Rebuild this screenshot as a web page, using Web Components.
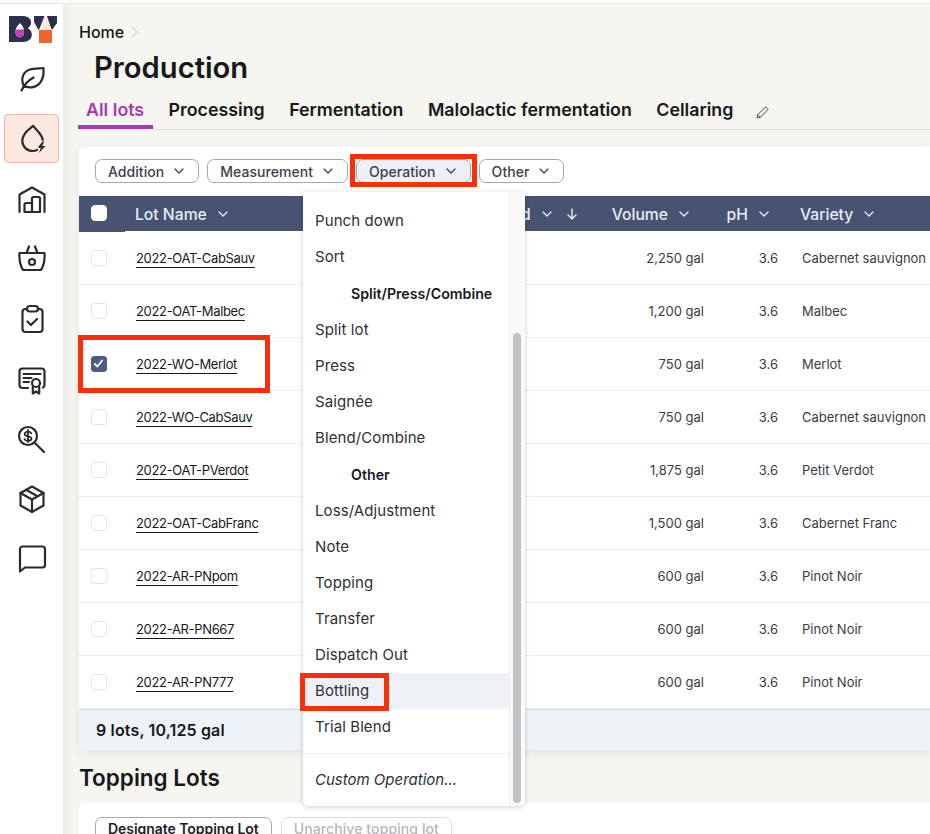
<!DOCTYPE html>
<html lang="en">
<head>
<meta charset="utf-8">
<title>Production</title>
<style>
    html, body { margin: 0; height: 100%; overflow: hidden; }
    body { font-family: Inter, "Liberation Sans", sans-serif; color: #17181c; background: #f6f5f0; }
</style>
</head>
<body>
<app-shell>
    <side-nav slot="nav"></side-nav>
    <page-head slot="head" crumb="Home" title="Production"></page-head>
    <tab-bar slot="head">
        <tab-link active>All lots</tab-link>
        <tab-link>Processing</tab-link>
        <tab-link>Fermentation</tab-link>
        <tab-link>Malolactic fermentation</tab-link>
        <tab-link>Cellaring</tab-link>
    </tab-bar>
    <lots-table>
        <action-button slot="actions" chevron>Addition</action-button>
        <action-button slot="actions" chevron>Measurement</action-button>
        <action-button slot="actions" chevron open>Operation</action-button>
        <action-button slot="actions" chevron>Other</action-button>
        <lot-row volume="2,250 gal" variety="Cabernet sauvignon">2022-OAT-CabSauv</lot-row>
        <lot-row volume="1,200 gal" variety="Malbec">2022-OAT-Malbec</lot-row>
        <lot-row volume="750 gal" variety="Merlot" checked>2022-WO-Merlot</lot-row>
        <lot-row volume="750 gal" variety="Cabernet sauvignon">2022-WO-CabSauv</lot-row>
        <lot-row volume="1,875 gal" variety="Petit Verdot">2022-OAT-PVerdot</lot-row>
        <lot-row volume="1,500 gal" variety="Cabernet Franc">2022-OAT-CabFranc</lot-row>
        <lot-row volume="600 gal" variety="Pinot Noir">2022-AR-PNpom</lot-row>
        <lot-row volume="600 gal" variety="Pinot Noir">2022-AR-PN667</lot-row>
        <lot-row volume="600 gal" variety="Pinot Noir">2022-AR-PN777</lot-row>
        <span slot="total">9 lots, 10,125 gal</span>
    </lots-table>
    <topping-card>
        <action-button slot="actions" strong>Designate Topping Lot</action-button>
        <action-button slot="actions" disabled>Unarchive topping lot</action-button>
    </topping-card>
    <operation-menu slot="over">
        <menu-item>Punch down</menu-item>
        <menu-item>Sort</menu-item>
        <menu-item heading>Split/Press/Combine</menu-item>
        <menu-item>Split lot</menu-item>
        <menu-item>Press</menu-item>
        <menu-item>Saignée</menu-item>
        <menu-item>Blend/Combine</menu-item>
        <menu-item heading>Other</menu-item>
        <menu-item>Loss/Adjustment</menu-item>
        <menu-item>Note</menu-item>
        <menu-item>Topping</menu-item>
        <menu-item>Transfer</menu-item>
        <menu-item>Dispatch Out</menu-item>
        <menu-item hover>Bottling</menu-item>
        <menu-item>Trial Blend</menu-item>
        <menu-item custom>Custom Operation...</menu-item>
    </operation-menu>
    <mark-box slot="over" style="left:350px;top:151px;width:127px;height:33px"></mark-box>
    <mark-box slot="over" style="left:78px;top:332px;width:192px;height:58px"></mark-box>
    <mark-box slot="over" style="left:300px;top:670px;width:89px;height:38px"></mark-box>
</app-shell>

<script>
    function define(name, html, extra) {
        customElements.define(name, class extends HTMLElement {
            constructor() {
                super();
                this.attachShadow({mode: "open"});
                this.shadowRoot.innerHTML = html;
            }
            connectedCallback() {
                if (extra) extra.call(this, this.shadowRoot);
            }
        });
    }

    const chevron = '<svg width="10" height="6" viewBox="0 0 10 6" fill="none" stroke="currentColor" stroke-width="1.3" stroke-linecap="round" stroke-linejoin="round"><path d="M1 1l4 4 4-4"/></svg>';
    const arrow = '<svg width="10" height="12" viewBox="0 0 10 12" fill="none" stroke="currentColor" stroke-width="1.4" stroke-linecap="round" stroke-linejoin="round"><path d="M5 1v10M1 7l4 4 4-4"/></svg>';

    define("app-shell", `
        <style>
            :host { display: grid; grid-template-columns: 63px 1fr; width: 930px; height: 834px; overflow: hidden; position: relative; border-top: 3px solid #fbfbfa; box-sizing: border-box; }
            main { padding: 0 0 0 16px; min-width: 0; overflow: hidden; border-top: 1px solid #ebebe8; background: linear-gradient(90deg, #eeede9 0, #f6f5f0 10px); }
        </style>
        <slot name="nav"></slot>
        <main>
            <slot name="head"></slot>
            <slot></slot>
        </main>
        <slot name="over"></slot>
    `);

    // all drawn on a 32 box, centred on the sidebar column
    const icons = {
        leaf: '<path d="M5.500 27.500C8 22 12 17.500 17.500 14.500M7.500 22.500C4.500 15 7.500 8.500 14 6.500c4-1.200 9-1 13.500-1.500.5 5-.5 11.500-4 15.500-4 4.300-11 5.200-16 2Z"/>',
        drop: '<path d="M21 27c-1.300.7-2.700 1-4 1-6 0-10.700-4.400-10.700-10 0-3.600 1.900-6.700 4.200-9.500L17 2.800l5.500 6.200c2 2.400 3.800 5 4.200 7.800"/><path d="M26.500 18.500 21.500 24.800h3.300L23 30l6.500-7h-3.300l2-4.500Z" fill="currentColor" stroke="none"/>',
        winery: '<path d="M3.500 29V11.500L16 4.500l12.500 7V29"/><path d="M8.500 29V21.500c0-.8.6-1.500 1.500-1.500h6M16 29V15.500c0-.8.6-1.500 1.500-1.500h5c.9 0 1.500.7 1.500 1.500V29M8.500 29H24"/>',
        basket: '<path d="M3.500 10h25c.5 5.500-.5 11-2.300 15-.5 1.200-1.500 2-2.700 2H8.500c-1.200 0-2.200-.8-2.700-2-1.800-4-2.800-9.500-2.300-15Z"/><circle cx="16" cy="19" r="3"/><path d="M10.500 10l2.500-6.500M21.500 10 19 3.500"/>',
        clip: '<path d="M11 6H9.500c-1.700 0-3 1.300-3 3v17c0 1.700 1.300 3 3 3h14c1.700 0 3-1.300 3-3V9c0-1.700-1.300-3-3-3H22"/><rect x="11" y="3" width="11" height="5.500" rx="2.700"/><path d="M11.500 18.500 15 22l6-6"/>',
        cert: '<path d="M12 25H6.500c-1.700 0-3-1.300-3-3V8.500c0-1.700 1.300-3 3-3h19c1.700 0 3 1.300 3 3V22c0 1-.5 2-1.500 2.500"/><path d="M7.500 11h17M7.500 15h8M7.500 19h5.500"/><circle cx="20" cy="20" r="4"/><path d="M16.800 24v6.500l3.200-2 3.200 2V24"/>',
        search: '<circle cx="12" cy="13" r="9"/><path d="m19.500 20.500 8.500 8.500"/><path d="M15.300 10.300c-.5-1-1.600-1.600-3.300-1.600-2 0-3.300 1-3.300 2.300 0 3.300 6.800 1.500 6.800 4.500 0 1.400-1.500 2.300-3.500 2.300-1.700 0-3-.6-3.500-1.700M12 7v12" stroke-width="1.800"/>',
        box: '<path d="M16 3.500 27.500 10v12.500L16 29 4.500 22.500V10Z"/><path d="M4.500 10 16 16.500 27.500 10M16 16.500V29M10 6.800l11.500 6.500"/>',
        chat: '<path d="M4 28.500V6c0-1.400 1.100-2.500 2.500-2.500h20c1.400 0 2.500 1.100 2.500 2.500v16c0 1.400-1.100 2.500-2.500 2.500H9Z"/>'
    };

    define("nav-icon", `
        <style>
            :host { display: flex; align-items: center; justify-content: center; width: 55px; height: 49px; box-sizing: border-box; border: 1px solid transparent; border-radius: 4px; color: #2b2b2e; }
            :host([active]) { background: #fde9e0; border-color: #f3b9a0; }
            svg { width: 32px; height: 32px; fill: none; stroke: currentColor; stroke-width: 2.2; stroke-linecap: round; stroke-linejoin: round; }
        </style>
        <svg viewBox="0 0 32 32"></svg>
    `, function (root) {
        root.querySelector("svg").innerHTML = icons[this.getAttribute("name")];
    });

    define("side-nav", `
        <style>
            :host { display: flex; flex-direction: column; align-items: center; background: #fff; height: 100%; padding-top: 11px; box-sizing: border-box; border-top: 1px solid #ebebe8; }
            .logo { display: block; align-self: flex-start; margin: 0 0 11px 9px; }
            .stack { display: flex; flex-direction: column; align-items: center; gap: 11px; }
        </style>
        <svg class="logo" width="48" height="28" viewBox="0 0 48 28">
            <path d="M0 1h13c6 0 9 2.600 9 6.400 0 2.800-1.500 4.800-3.600 5.900 2.800 1 4.400 3.300 4.400 6.200 0 4.700-3.500 7.500-9.500 7.500H0Z" fill="#2a2f4b"/>
            <path d="M11 8c2 2.200 4 4.800 4 7.300V18a4.200 4.200 0 0 1-8.400 0v-2.700C6.600 12.800 9 10.200 11 8Z" fill="#fff"/>
            <path d="M6.600 14.500h8.400V18a4.200 4.200 0 0 1-8.400 0Z" fill="#c63fc0"/>
            <path d="M25 1h10.500L30 15h-.5L25 7Z" fill="#2a2f4b"/>
            <path d="M38 1h10v7l-5 7h-.5Z" fill="#2a2f4b"/>
            <path d="M36.700 1 43 15H30Z" fill="#fbe8dd"/>
            <rect x="30" y="15" width="13" height="13" fill="#f2642d"/>
        </svg>
        <div class="stack"></div>
    `, function (root) {
        const stack = root.querySelector(".stack");
        ["leaf", "drop", "winery", "basket", "clip", "cert", "search", "box", "chat"].forEach((name) => {
            let icon = document.createElement("nav-icon");
            icon.setAttribute("name", name);
            if (name === "drop") icon.setAttribute("active", "");
            stack.appendChild(icon);
        });
    });

    define("page-head", `
        <style>
            :host { display: block; }
            .crumb { display: flex; align-items: center; gap: 7px; height: 20px; margin-top: 18px; font-size: 16px; font-weight: 500; }
            .crumb svg { color: #d5d5d2; }
            h1 { margin: 7px 0 0 15px; font-size: 29.200px; line-height: 38px; font-weight: 600; }
        </style>
        <div class="crumb"><span id="crumb"></span>
            <svg width="7" height="12" viewBox="0 0 7 12" fill="none" stroke="currentColor" stroke-width="1.2"><path d="M1 1l5 5-5 5"/></svg>
        </div>
        <h1 id="title"></h1>
    `, function (root) {
        root.getElementById("crumb").textContent = this.getAttribute("crumb");
        root.getElementById("title").textContent = this.getAttribute("title");
    });

    define("tab-bar", `
        <style>
            :host { display: flex; align-items: flex-end; height: 38px; margin-top: 5px; border-bottom: 1px solid #e3e3e6; box-sizing: border-box; }
            svg { margin: 0 0 9.500px 5px; color: #44464d; }
            .tabs { display: flex; margin-left: -1px; }
        </style>
        <div class="tabs"><slot></slot></div>
        <svg width="15" height="15" viewBox="0 0 15 15" fill="none" stroke="currentColor" stroke-width="1"><path d="M2 13l.8-3.400 7-7c.6-.6 1.500-.6 2.100 0l.5.5c.6.6.6 1.500 0 2.100l-7 7Z"/><path d="M2.800 9.600l2.600 2.600"/></svg>
    `);

    define("tab-link", `
        <style>
            :host { display: block; padding: 0 8px; margin-right: 8.500px; height: 37px; line-height: 36px; font-size: 17.800px; font-weight: 600; box-sizing: border-box; border-bottom: 4px solid transparent; white-space: nowrap; }
            :host([active]) { color: #a93bad; border-bottom-color: #a93bad; padding-right: 8.500px; margin-right: 8px; }
        </style>
        <slot></slot>
    `);

    define("action-button", `
        <style>
            :host { display: inline-flex; align-items: center; gap: 10px; height: 24px; padding: 0 14px 0 12px; box-sizing: border-box; border: 1px solid #a5a7ab; border-radius: 7px; background: #fff; font-size: 14px; font-weight: 500; color: #3e4149; white-space: nowrap; letter-spacing: .05px; }
            :host([open]) { background: #eaf0f6; }
            :host([strong]) { color: #1d2026; font-weight: 600; padding: 0 12px 1px; letter-spacing: -.05px; }
            :host([disabled]) { color: #b5b7bb; border-color: #dcdde0; padding: 0 12px 1px; letter-spacing: .1px; }
            span { display: inline-flex; }
        </style>
        <slot></slot><span id="c"></span>
    `, function (root) {
        let holder = root.getElementById("c");
        if (this.hasAttribute("chevron")) holder.innerHTML = chevron; else holder.remove();
    });

    const cols = "46px 400px 179px 74px 152px";

    define("check-box", `
        <style>
            :host { display: block; width: 16px; height: 16px; box-sizing: border-box; background: #fff; border: 1.5px solid #e4e6ea; border-radius: 3px; }
            :host([checked]) { background: #4d5b85; border-color: #4d5b85; }
            :host([plain]) { border-color: #fff; border-radius: 4px; }
            svg { display: none; }
            :host([checked]) svg { display: block; margin: 1px; }
        </style>
        <svg width="11" height="11" viewBox="0 0 11 11" fill="none" stroke="#fff" stroke-width="1.8" stroke-linecap="round" stroke-linejoin="round"><path d="M1.800 6l2.600 2.500 4.800-6"/></svg>
    `);

    define("lot-row", `
        <style>
            :host { display: grid; grid-template-columns: ${cols}; align-items: center; height: 53px; box-sizing: border-box; border-bottom: 1px solid #eeeff1; font-size: 13px; color: #3a3c42; }
            .check { padding-left: 12px; }
            .name { padding-left: 11px; color: #17181c; }
            u { text-decoration-thickness: 1px; text-underline-offset: 4px; letter-spacing: -.33px; }
            .num { text-align: right; }
            .variety { padding-left: 24px; white-space: nowrap; }
        </style>
        <div class="check"><check-box id="box"></check-box></div>
        <div class="name"><u><slot></slot></u></div>
        <div class="num" id="volume"></div>
        <div class="num">3.6</div>
        <div class="variety" id="variety"></div>
    `, function (root) {
        root.getElementById("volume").textContent = this.getAttribute("volume");
        root.getElementById("variety").textContent = this.getAttribute("variety");
        if (this.hasAttribute("checked")) root.getElementById("box").setAttribute("checked", "");
    });

    define("lots-table", `
        <style>
            :host { display: block; width: 851px; margin-top: 17px; background: #fff; border-radius: 5px 0 0 5px; box-shadow: 0 3px 10px rgba(40, 40, 60, .08); }
            .bar { display: flex; gap: 8px; padding: 12px 16px 13px; }
            .head { display: grid; grid-template-columns: ${cols}; align-items: center; height: 35px; padding-bottom: 2px; box-sizing: border-box; margin-bottom: 1px; background: #475370; color: #e7edf6; font-size: 15.700px; font-weight: 500; }
            .head > div { display: flex; align-items: center; gap: 11px; white-space: nowrap; }
            .head > .tick { align-self: start; height: 36px; padding: 0 0 2px 12px; box-sizing: border-box; background: #475370; }
            .split { justify-content: space-between; }
            .group { display: flex; align-items: center; gap: 11px; }
            .sorted { margin-left: -4px; }
            .sorted svg:last-of-type { margin-left: 4px; }
            .volume { padding-right: 15px; }
            .end { justify-content: flex-end; }
            .foot { display: flex; align-items: center; height: 41px; padding-left: 17px; background: #eef3f8; border-top: 1px solid #d5d9df; box-sizing: border-box; font-size: 16px; letter-spacing: .15px; font-weight: 600; border-radius: 0 0 0 5px; }
        </style>
        <div class="bar"><slot name="actions"></slot></div>
        <div class="head">
            <div class="tick"><check-box plain></check-box></div>
            <div style="padding-left:10px">Lot Name ${chevron}</div>
            <div class="split">
                <div class="group sorted">d ${chevron} ${arrow}</div>
                <div class="group volume">Volume ${chevron}</div>
            </div>
            <div class="end" style="padding-right:9px">pH ${chevron}</div>
            <div style="padding-left:22px">Variety ${chevron}</div>
        </div>
        <slot></slot>
        <div class="foot"><slot name="total"></slot></div>
    `);

    define("topping-card", `
        <style>
            :host { display: block; margin-top: 12px; }
            h2 { margin: 0; font-size: 22.500px; line-height: 32px; font-weight: 600; }
            .card { width: 851px; height: 60px; margin-top: 9px; padding: 14px 16px; box-sizing: border-box; background: #fff; border-radius: 5px 0 0 0; display: flex; gap: 9px; }
        </style>
        <h2>Topping Lots</h2>
        <div class="card"><slot name="actions"></slot></div>
    `);

    define("menu-item", `
        <style>
            :host { display: block; height: 36px; line-height: 36px; padding-left: 12px; font-size: 15px; letter-spacing: .1px; color: #2e3036; white-space: nowrap; }
            :host([heading]) { padding-left: 48px; font-size: 14.200px; letter-spacing: 0; font-weight: 600; color: #17181c; height: 37px; line-height: 38px; }
            :host([hover]) { background: #eef2f6; }
            :host([custom]) { font-style: italic; letter-spacing: 0; margin-top: 8px; padding-top: 8px; height: 42px; border-top: 1px solid #eeeff1; line-height: 36px; }
        </style>
        <slot></slot>
    `);

    define("operation-menu", `
        <style>
            :host { position: absolute; left: 303px; top: 189px; width: 222px; height: 614px; background: #fff; border-radius: 0 0 5px 5px; box-shadow: 0 1px 5px rgba(30, 30, 50, .22); overflow: hidden; box-sizing: border-box; padding-top: 11px; }
            .list { width: 207px; }
            .track { position: absolute; right: 0; top: 0; bottom: 0; width: 15px; background: #fafafa; border-left: 1px solid #ececec; }
            .thumb { position: absolute; left: 3px; top: 141px; width: 8px; height: 470px; border-radius: 4px; background: #c2c2c2; }
        </style>
        <div class="list"><slot></slot></div>
        <div class="track"><div class="thumb"></div></div>
    `);

    define("mark-box", `
        <style>
            :host { position: absolute; box-sizing: border-box; border: 5px solid #f92f0a; pointer-events: none; }
        </style>
    `);
</script>
</body>
</html>
